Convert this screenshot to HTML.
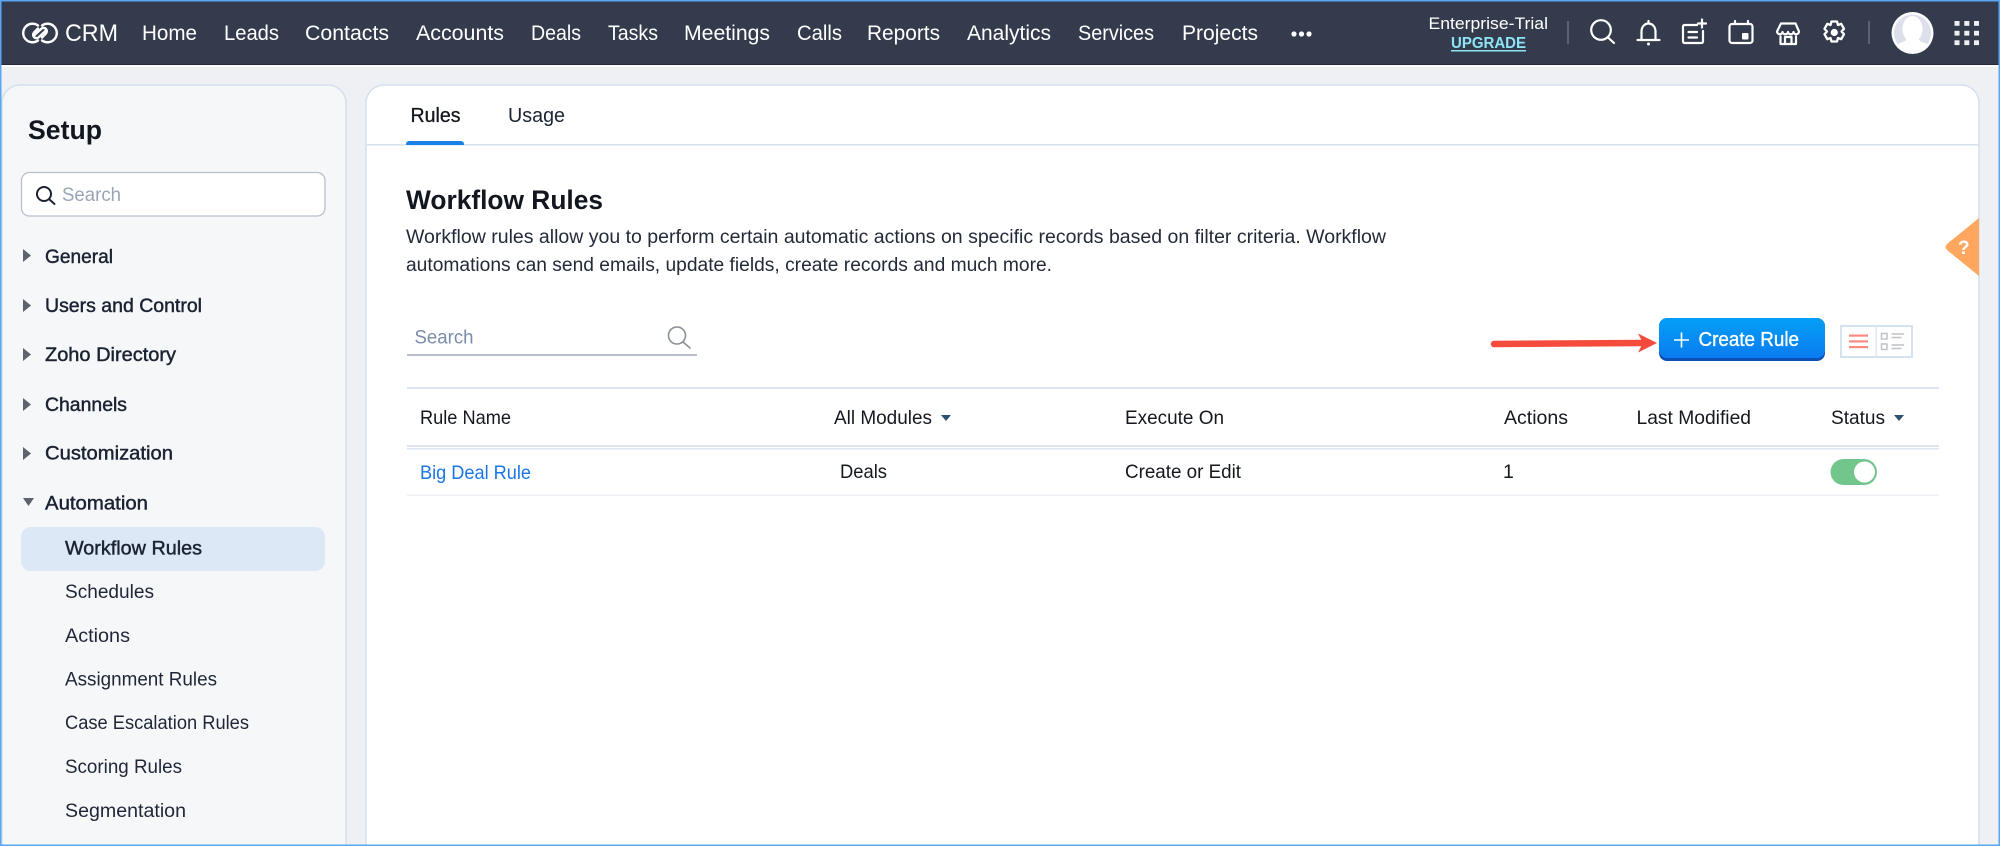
<!DOCTYPE html>
<html lang="en"><head><meta charset="utf-8"><title>Workflow Rules</title>
<style>
html,body{margin:0;padding:0;width:2000px;height:846px;overflow:hidden;background:#eef0f4}
svg{display:block}
text{font-family:"Liberation Sans",sans-serif}
.nav{font-size:21px;fill:#fff}
.h{font-size:19.5px;fill:#1b2333;stroke:#1b2333;stroke-width:.45px}
.s{font-size:19px;fill:#1f2737}
.t{font-size:19.5px;fill:#15181f}
.ic{fill:none;stroke:#fff;stroke-width:2.2;stroke-linecap:round;stroke-linejoin:round}
</style></head><body>
<svg xmlns="http://www.w3.org/2000/svg" width="2000" height="846" viewBox="0 0 2000 846">
<rect width="2000" height="846" fill="#eef0f4"/>
<rect y="64" width="2000" height="3" fill="#fafbfc"/>
<rect width="2000" height="65" fill="#333b4c"/>
<rect y="64" width="2000" height="1" fill="#232936"/>

<!-- panels -->
<path d="M2 846V103a18 18 0 0 1 18-18H328a18 18 0 0 1 18 18V846Z" fill="#f6f7f9" stroke="#d4e0ee" stroke-width="1.5"/>
<path d="M366 846V103a18 18 0 0 1 18-18H1961a18 18 0 0 1 18 18V846Z" fill="#fff" stroke="#d4e0ee" stroke-width="1.5"/>

<!-- logo -->
<g fill="none" stroke="#fff" stroke-width="2.4" stroke-linecap="round">
<path d="M38 25.500A9.300 9.300 0 1 0 38 40.500"/>
<path d="M42 25.500A9.300 9.300 0 1 1 42 40.500"/>
<path d="M33.500 36L41 29a3.300 3.300 0 0 1 5 4.400L42 37.500"/>
<path d="M46.500 30L39 37a3.300 3.300 0 0 1-5-4.400L38 28.500"/>
</g>
<text x="65" y="41" font-size="24" fill="#fff" textLength="53" lengthAdjust="spacingAndGlyphs">CRM</text>
<g class="nav">
<text x="142" y="40" textLength="55" lengthAdjust="spacingAndGlyphs">Home</text>
<text x="224" y="40" textLength="55" lengthAdjust="spacingAndGlyphs">Leads</text>
<text x="305" y="40" textLength="84" lengthAdjust="spacingAndGlyphs">Contacts</text>
<text x="416" y="40" textLength="88" lengthAdjust="spacingAndGlyphs">Accounts</text>
<text x="531" y="40" textLength="50" lengthAdjust="spacingAndGlyphs">Deals</text>
<text x="608" y="40" textLength="50" lengthAdjust="spacingAndGlyphs">Tasks</text>
<text x="684" y="40" textLength="86" lengthAdjust="spacingAndGlyphs">Meetings</text>
<text x="797" y="40" textLength="45" lengthAdjust="spacingAndGlyphs">Calls</text>
<text x="867" y="40" textLength="73" lengthAdjust="spacingAndGlyphs">Reports</text>
<text x="967" y="40" textLength="84" lengthAdjust="spacingAndGlyphs">Analytics</text>
<text x="1078" y="40" textLength="76" lengthAdjust="spacingAndGlyphs">Services</text>
<text x="1182" y="40" textLength="76" lengthAdjust="spacingAndGlyphs">Projects</text>
</g>
<g fill="#fff"><circle cx="1294" cy="34" r="2.600"/><circle cx="1301.500" cy="34" r="2.600"/><circle cx="1309" cy="34" r="2.600"/></g>

<text x="1428.500" y="29" font-size="17" fill="#fff" textLength="119.500" lengthAdjust="spacingAndGlyphs">Enterprise-Trial</text>
<text x="1451" y="48" font-size="16" font-weight="700" fill="#8ee4f5" textLength="75" lengthAdjust="spacingAndGlyphs">UPGRADE</text>
<rect x="1451" y="50" width="75" height="1.500" fill="#8ee4f5"/>
<rect x="1567" y="21" width="2" height="23" fill="#5b6373"/>
<rect x="1868" y="21" width="2" height="23" fill="#5b6373"/>

<g class="ic">
<circle cx="1601" cy="30" r="9.800"/><path d="M1608 37.500l6 5.500"/>
<path d="M1648.500 21v2M1641.500 40V31.500c0-4.500 3-8 7-8s7 3.500 7 8V40M1637.500 40h22"/>
<path d="M1697 25h-12.500a1.500 1.500 0 0 0-1.500 1.500v15a1.500 1.500 0 0 0 1.500 1.500h17a1.500 1.500 0 0 0 1.500-1.500V31M1688.500 32h8.500M1688.500 37.500h8.500M1702 19.500v8M1698 23.500h8"/>
<path d="M1732 24h18a2.500 2.500 0 0 1 2.500 2.500v14a2.500 2.500 0 0 1-2.500 2.500h-18a2.500 2.500 0 0 1-2.500-2.500v-14A2.500 2.500 0 0 1 1732 24ZM1735 21v3M1748 21v3"/>
<path d="M1781 23.500h14.500l3.500 8c0 3.500-5 3.500-5.500.5c-.5 3-5 3-5.500 0c-.5 3-5 3-5.500 0c-.5 3-5 3-5.500-.5ZM1780.500 36.500v7.500h15.500v-7.500M1785 44v-7h6.500v7"/>
<path d="M1831.500 21.500h5.500l1 3.500 3.200-1.200 2.800 5-2.500 2.700 2.500 2.700-2.800 5-3.200-1.200-1 3.500h-5.500l-1-3.500-3.200 1.200-2.800-5 2.500-2.700-2.500-2.700 2.800-5 3.200 1.200Z" stroke-width="2.300"/>
</g>
<circle cx="1648.500" cy="44" r="1.500" fill="#fff"/>
<circle cx="1834.300" cy="32.500" r="3.600" fill="#fff"/>
<rect x="1742" y="33" width="6.500" height="6.500" rx="1" fill="#fff"/>

<!-- avatar -->
<circle cx="1912.500" cy="33" r="21" fill="#fff"/>
<clipPath id="av"><circle cx="1912.500" cy="33" r="18.500"/></clipPath>
<g clip-path="url(#av)">
<rect x="1890" y="10" width="46" height="46" fill="#dde0ea"/>
<ellipse cx="1912.500" cy="29" rx="10" ry="13" fill="#fff"/>
<path d="M1906 37v3c-1 2-8 3-13 7v10h39v-10c-5-4-12-5-13-7v-3Z" fill="#fff"/>
</g>

<g fill="#f0f0f0">
<rect x="1954.500" y="21" width="5" height="4.800"/><rect x="1964.300" y="21" width="5" height="4.800"/><rect x="1974" y="21" width="5" height="4.800"/>
<rect x="1954.500" y="30.800" width="5" height="4.800"/><rect x="1964.300" y="30.800" width="5" height="4.800"/><rect x="1974" y="30.800" width="5" height="4.800"/>
<rect x="1954.500" y="40.300" width="5" height="4.800"/><rect x="1964.300" y="40.300" width="5" height="4.800"/><rect x="1974" y="40.300" width="5" height="4.800"/>
</g>

<!-- sidebar -->
<text x="28" y="139" font-size="27" font-weight="700" fill="#12161e" textLength="74" lengthAdjust="spacingAndGlyphs">Setup</text>
<rect x="21.500" y="172.500" width="303.500" height="43.500" rx="8" fill="#fff" stroke="#b8c0cc" stroke-width="1.300"/>
<circle cx="44" cy="194" r="7" fill="none" stroke="#1b2333" stroke-width="2"/><path d="M49.500 199.500l5 4.500" stroke="#1b2333" stroke-width="2" stroke-linecap="round"/>
<text x="62" y="201" font-size="19.500" fill="#9aa5b8" textLength="59" lengthAdjust="spacingAndGlyphs">Search</text>

<g fill="#5d626c">
<path d="M23 249l8 6.500-8 6.500Z"/><path d="M23 299l8 6.500-8 6.500Z"/><path d="M23 348l8 6.500-8 6.500Z"/><path d="M23 398l8 6.500-8 6.500Z"/><path d="M23 447l8 6.500-8 6.500Z"/>
<path d="M23 498h11l-5.500 8Z"/>
</g>
<text class="h" x="45" y="263" textLength="68" lengthAdjust="spacingAndGlyphs">General</text>
<text class="h" x="45" y="312" textLength="157" lengthAdjust="spacingAndGlyphs">Users and Control</text>
<text class="h" x="45" y="361" textLength="131" lengthAdjust="spacingAndGlyphs">Zoho Directory</text>
<text class="h" x="45" y="411" textLength="82" lengthAdjust="spacingAndGlyphs">Channels</text>
<text class="h" x="45" y="459.500" textLength="128" lengthAdjust="spacingAndGlyphs">Customization</text>
<text class="h" x="45" y="509.500" textLength="103" lengthAdjust="spacingAndGlyphs">Automation</text>

<rect x="21" y="527" width="304" height="44" rx="10" fill="#dce8f5"/>
<text class="h" x="65" y="554.500" textLength="137" lengthAdjust="spacingAndGlyphs">Workflow Rules</text>
<text class="s" x="65" y="598" textLength="89" lengthAdjust="spacingAndGlyphs">Schedules</text>
<text class="s" x="65" y="642" textLength="65" lengthAdjust="spacingAndGlyphs">Actions</text>
<text class="s" x="65" y="685.500" textLength="152" lengthAdjust="spacingAndGlyphs">Assignment Rules</text>
<text class="s" x="65" y="729" textLength="184" lengthAdjust="spacingAndGlyphs">Case Escalation Rules</text>
<text class="s" x="65" y="773" textLength="117" lengthAdjust="spacingAndGlyphs">Scoring Rules</text>
<text class="s" x="65" y="817" textLength="121" lengthAdjust="spacingAndGlyphs">Segmentation</text>

<!-- tabs -->
<rect x="367" y="144" width="1612" height="1.500" fill="#d6e2f0"/>
<path d="M406 145v-1a3 3 0 0 1 3-3h52a3 3 0 0 1 3 3v1Z" fill="#1a80ea"/>
<text x="410.500" y="122" font-size="20" fill="#12161e" stroke="#12161e" stroke-width=".3" textLength="50" lengthAdjust="spacingAndGlyphs">Rules</text>
<text x="508" y="122" font-size="20" fill="#1b2333" textLength="57" lengthAdjust="spacingAndGlyphs">Usage</text>

<text x="406" y="209" font-size="27" font-weight="700" fill="#12161e" textLength="197" lengthAdjust="spacingAndGlyphs">Workflow Rules</text>
<text x="406" y="243" font-size="19" fill="#232a39" textLength="980" lengthAdjust="spacingAndGlyphs">Workflow rules allow you to perform certain automatic actions on specific records based on filter criteria. Workflow</text>
<text x="406" y="271" font-size="19" fill="#232a39" textLength="646" lengthAdjust="spacingAndGlyphs">automations can send emails, update fields, create records and much more.</text>

<!-- search -->
<text x="414.500" y="343.500" font-size="19" fill="#7a8bab" textLength="59" lengthAdjust="spacingAndGlyphs">Search</text>
<circle cx="677" cy="335.500" r="8.500" fill="none" stroke="#8a8f96" stroke-width="1.600"/><path d="M683 342l7 6" stroke="#8a8f96" stroke-width="1.600" stroke-linecap="round"/>
<rect x="407" y="354" width="290" height="2" fill="#b8c0cc"/>

<!-- arrow -->
<path d="M1494 344l148-1" stroke="#f44b3c" stroke-width="6.500" stroke-linecap="round" fill="none"/>
<path d="M1638 333.500l19 9.500-19 9.500 5-9.500Z" fill="#f44b3c"/>

<!-- button -->
<defs><linearGradient id="b" x1="0" y1="0" x2="0" y2="1"><stop offset="0" stop-color="#049ff6"/><stop offset="1" stop-color="#0a7cf0"/></linearGradient></defs>
<rect x="1659" y="318" width="166" height="43" rx="8" fill="#0c50b4"/>
<rect x="1659" y="318" width="166" height="40" rx="8" fill="url(#b)"/>
<path d="M1674 340h15M1681.500 332.500v15" stroke="#fff" stroke-width="1.600"/>
<text x="1698.500" y="346" font-size="20" fill="#fff" stroke="#fff" stroke-width=".35" textLength="100.500" lengthAdjust="spacingAndGlyphs">Create Rule</text>

<!-- view toggle -->
<rect x="1841" y="326" width="71" height="31" fill="#fff" stroke="#d5e2f0" stroke-width="2"/>
<rect x="1875.500" y="326" width="1.500" height="31" fill="#e2e9f2"/>
<g fill="#fb8a82"><rect x="1849" y="334.500" width="19" height="2.200"/><rect x="1849" y="340.300" width="19" height="2.200"/><rect x="1849" y="346" width="19" height="2.200"/></g>
<g fill="none" stroke="#bfc2c7" stroke-width="1.500"><rect x="1881.500" y="333.500" width="5.500" height="5.500"/><rect x="1881.500" y="344" width="5.500" height="5.500"/><path d="M1891.500 334h12.500M1891.500 337.500h10M1891.500 345h12.500M1891.500 348.500h10"/></g>

<!-- table -->
<rect x="407" y="387" width="1532" height="2" fill="#dde5f0"/>
<rect x="407" y="445" width="1532" height="2" fill="#dde5f0"/>
<rect x="407" y="448" width="1532" height="1.500" fill="#dde5f0"/>
<rect x="407" y="494.500" width="1532" height="1.500" fill="#eef1f5"/>
<text class="t" x="420" y="424" textLength="91" lengthAdjust="spacingAndGlyphs">Rule Name</text>
<text class="t" x="834" y="424" textLength="98" lengthAdjust="spacingAndGlyphs">All Modules</text>
<path d="M941 415h10l-5 6Z" fill="#2b5270"/>
<text class="t" x="1125" y="424" textLength="99" lengthAdjust="spacingAndGlyphs">Execute On</text>
<text class="t" x="1504" y="424" textLength="64" lengthAdjust="spacingAndGlyphs">Actions</text>
<text class="t" x="1636.500" y="424" textLength="114.500" lengthAdjust="spacingAndGlyphs">Last Modified</text>
<text class="t" x="1831" y="424" textLength="54" lengthAdjust="spacingAndGlyphs">Status</text>
<path d="M1894 415h10l-5 6Z" fill="#2b5270"/>
<text x="420" y="479" font-size="19.500" fill="#1976e6" textLength="111" lengthAdjust="spacingAndGlyphs">Big Deal Rule</text>
<text class="t" x="840" y="478" textLength="47" lengthAdjust="spacingAndGlyphs">Deals</text>
<text class="t" x="1125" y="478" textLength="116" lengthAdjust="spacingAndGlyphs">Create or Edit</text>
<text class="t" x="1503" y="478">1</text>
<rect x="1830.500" y="459" width="46.500" height="26" rx="13" fill="#72c58b"/>
<circle cx="1864.500" cy="472" r="10.500" fill="#fff"/>

<!-- help tag -->
<path d="M1979 218L1947 244a4 4 0 0 0 0 6L1979 276Z" fill="#ffa75f"/>
<text x="1958" y="254" font-size="19" font-weight="700" fill="#fff">?</text>

<!-- image frame -->
<rect x=".75" y=".75" width="1998.500" height="844.500" fill="none" stroke="#5aa6f0" stroke-width="1.500"/>
</svg>
</body></html>
